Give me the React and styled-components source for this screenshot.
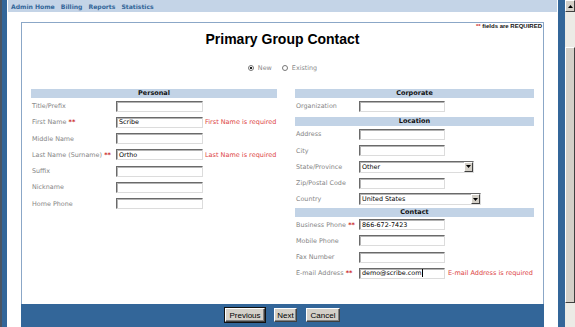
import React from 'react';
import styled, { createGlobalStyle } from 'styled-components';

const GlobalStyle = createGlobalStyle`
  * { box-sizing: border-box; }
  html, body { margin: 0; padding: 0; background: #fff; overflow: hidden; }
  body { font-family: "DejaVu Sans", Verdana, sans-serif; }
`;

const personal = [
  { label: 'Title/Prefix' },
  { label: 'First Name', req: true, value: 'Scribe', error: 'First Name is required' },
  { label: 'Middle Name' },
  { label: 'Last Name (Surname)', req: true, value: 'Ortho', error: 'Last Name is required' },
  { label: 'Suffix' },
  { label: 'Nickname' },
  { label: 'Home Phone' },
];

const sections = [
  { title: 'Corporate', top: 0, rows: [{ label: 'Organization' }] },
  {
    title: 'Location',
    top: 3,
    rows: [
      { label: 'Address' },
      { label: 'City' },
      { label: 'State/Province', select: 'Other', w: 115 },
      { label: 'Zip/Postal Code' },
      { label: 'Country', select: 'United States', w: 122 },
    ],
  },
  {
    title: 'Contact',
    top: 0,
    rows: [
      { label: 'Business Phone', req: true, value: '866-672-7423' },
      { label: 'Mobile Phone' },
      { label: 'Fax Number' },
      { label: 'E-mail Address', req: true, value: 'demo@scribe.com', caret: true, error: 'E-mail Address is required' },
    ],
  },
];

const Arrow = ({ up }) => (
  <svg width="5" height="3" viewBox="0 0 5 3">
    <path d={up ? 'M0 3 L2.5 0 L5 3 Z' : 'M0 0 L5 0 L2.5 3 Z'} fill="#000" />
  </svg>
);

const FieldRow = ({ row, labelW, boxW, errGap }) => (
  <Row>
    <Label $w={labelW}>
      {row.label}
      {row.req && <Req> **</Req>}
    </Label>
    {row.select ? (
      <SelectBox $w={row.w}>
        <SelectText>{row.select}</SelectText>
        <SelectButton><Arrow /></SelectButton>
      </SelectBox>
    ) : (
      <TextBox $w={boxW}>
        {row.value}
        {row.caret && <Caret />}
      </TextBox>
    )}
    {row.error && <ErrorText $gap={errGap}>{row.error}</ErrorText>}
  </Row>
);

export default function App() {
  return (
    <Page>
      <GlobalStyle />
      <LeftRail />
      <Main>
        <NavBar>
          <NavLink>Admin Home</NavLink>
          <NavLink>Billing</NavLink>
          <NavLink>Reports</NavLink>
          <NavLink>Statistics</NavLink>
        </NavBar>
        <BoxWrap>
          <Box>
            <FormBody>
              <RequiredNote><Req>**</Req> fields are REQUIRED</RequiredNote>
              <Title>Primary Group Contact</Title>
              <RadioRow>
                <RadioOption><RadioDot $on /> New</RadioOption>
                <RadioOption><RadioDot /> Existing</RadioOption>
              </RadioRow>
              <Columns>
                <Column $w={246}>
                  <SectionHead>Personal</SectionHead>
                  {personal.map((r) => (
                    <FieldRow key={r.label} row={r} labelW={85} boxW={87} errGap={2} />
                  ))}
                </Column>
                <Column $w={239}>
                  {sections.map((s) => (
                    <div key={s.title}>
                      <SectionHead $top={s.top}>{s.title}</SectionHead>
                      {s.rows.map((r) => (
                        <FieldRow key={r.label} row={r} labelW={64} boxW={86} errGap={3} />
                      ))}
                    </div>
                  ))}
                </Column>
              </Columns>
            </FormBody>
            <ButtonBar>
              <Button $w={40} $default>Previous</Button>
              <Button $w={23}>Next</Button>
              <Button $w={34}>Cancel</Button>
            </ButtonBar>
          </Box>
        </BoxWrap>
      </Main>
      <RightRail />
      <Scrollbar>
        <ScrollArrow><Arrow up /></ScrollArrow>
        <ScrollTrack $h={35} />
        <ScrollThumb />
      </Scrollbar>
    </Page>
  );
}

const Page = styled.div`
  display: flex;
  width: 575px;
  height: 327px;
  overflow: hidden;
`;

const LeftRail = styled.div`
  width: 7px;
  border-left: 2px solid #4b5563;
  background: #336699;
`;

const RightRail = styled.div`
  width: 7px;
  background: #336699;
`;

const Main = styled.div`
  flex: 1;
  display: flex;
  flex-direction: column;
  padding: 0 1px;
  background: #fff;
`;

const NavBar = styled.div`
  height: 12px;
  display: flex;
  align-items: center;
  gap: 6px;
  padding-left: 3px;
  background: #c4d4e7;
`;

const NavLink = styled.span`
  font-size: 6.1px;
  font-weight: bold;
  color: #336699;
  white-space: nowrap;
`;

const BoxWrap = styled.div`
  padding: 10px 13px 0 13px;
`;

const Box = styled.div`
  height: 305px;
  display: flex;
  flex-direction: column;
  border: 1px solid #8ba7c7;
  border-bottom: none;
`;

const FormBody = styled.div`
  flex: 1;
`;

const RequiredNote = styled.div`
  text-align: right;
  padding-right: 1px;
  font-family: "Liberation Sans", Arial, sans-serif;
  font-weight: bold;
  font-size: 6px;
  line-height: 7px;
  color: #111;
`;

const Title = styled.div`
  margin-top: 1px;
  text-align: center;
  font-family: "Liberation Sans", Arial, sans-serif;
  font-weight: bold;
  font-size: 14px;
  line-height: 16px;
  color: #000;
`;

const RadioRow = styled.div`
  margin-top: 16px;
  height: 10px;
  display: flex;
  justify-content: center;
  align-items: center;
  gap: 10px;
  font-size: 6.4px;
  color: #8a8a8a;
`;

const RadioOption = styled.span`
  display: flex;
  align-items: center;
  gap: 2px;
  white-space: pre;
`;

const RadioDot = styled.span`
  width: 6px;
  height: 6px;
  border-radius: 50%;
  border: 1px solid #777;
  background: ${(p) => (p.$on ? 'radial-gradient(circle, #222 0 1.1px, #fff 1.6px)' : '#fff')};
`;

const Columns = styled.div`
  margin-top: 16px;
  padding: 0 9px;
  display: flex;
  gap: 18px;
`;

const Column = styled.div`
  width: ${(p) => p.$w}px;
`;

const SectionHead = styled.div`
  margin-top: ${(p) => p.$top || 0}px;
  height: 9px;
  line-height: 9px;
  background: #c2d3e6;
  text-align: center;
  font-size: 6.5px;
  font-weight: bold;
  color: #111;
`;

const Row = styled.div`
  height: 16.25px;
  display: flex;
  align-items: center;
`;

const Label = styled.div`
  width: ${(p) => p.$w}px;
  flex-shrink: 0;
  padding-left: 1px;
  font-size: 6.4px;
  color: #858585;
  white-space: nowrap;
`;

const Req = styled.span`
  color: #cc3333;
  font-weight: bold;
`;

const TextBox = styled.div`
  width: ${(p) => p.$w}px;
  height: 11px;
  display: flex;
  align-items: center;
  padding-left: 2px;
  border: 1px solid;
  border-color: #6a6a6a #dcdcdc #dcdcdc #6a6a6a;
  box-shadow: inset 1px 1px 0 #b4b4b4;
  background: #fff;
  font-size: 6.4px;
  color: #000;
  white-space: nowrap;
`;

const Caret = styled.span`
  width: 1px;
  height: 8px;
  margin-left: 1px;
  background: #000;
`;

const SelectBox = styled.div`
  width: ${(p) => p.$w}px;
  height: 12px;
  display: flex;
  align-items: stretch;
  border: 1px solid;
  border-color: #6a6a6a #dcdcdc #dcdcdc #6a6a6a;
  box-shadow: inset 1px 1px 0 #b4b4b4;
  background: #fff;
`;

const SelectText = styled.span`
  flex: 1;
  display: flex;
  align-items: center;
  padding-left: 2px;
  font-size: 6.4px;
  color: #000;
`;

const SelectButton = styled.span`
  width: 9px;
  display: flex;
  align-items: center;
  justify-content: center;
  background: #d4d0c8;
  border: 1px solid;
  border-color: #fff #404040 #404040 #fff;
`;

const ErrorText = styled.span`
  margin-left: ${(p) => p.$gap}px;
  font-size: 6.5px;
  color: #dd4444;
  white-space: nowrap;
`;

const ButtonBar = styled.div`
  height: 23px;
  margin: 0 -1px;
  padding-top: 4px;
  display: flex;
  justify-content: center;
  align-items: flex-start;
  gap: 9px;
  background: #336699;
`;

const Button = styled.button`
  width: ${(p) => p.$w}px;
  height: 14px;
  padding: 0;
  font-family: "Liberation Sans", Arial, sans-serif;
  font-size: 8px;
  color: #000;
  background: #d4d0c8;
  border: 1px solid;
  border-color: #fff #404040 #404040 #fff;
  box-shadow: ${(p) => (p.$default ? '0 0 0 1px #111, inset -1px -1px 0 #808080' : 'inset -1px -1px 0 #808080')};
`;

const Scrollbar = styled.div`
  width: 10px;
  display: flex;
  flex-direction: column;
  background: #ecebe6;
`;

const ScrollArrow = styled.div`
  height: 12px;
  display: flex;
  align-items: center;
  justify-content: center;
  background: #d4d0c8;
  border: 1px solid;
  border-color: #fff #404040 #404040 #fff;
`;

const ScrollTrack = styled.div`
  height: ${(p) => p.$h}px;
`;

const ScrollThumb = styled.div`
  height: 256px;
  background: #d4d0c8;
  border: 1px solid;
  border-color: #fff #404040 #404040 #fff;
`;
